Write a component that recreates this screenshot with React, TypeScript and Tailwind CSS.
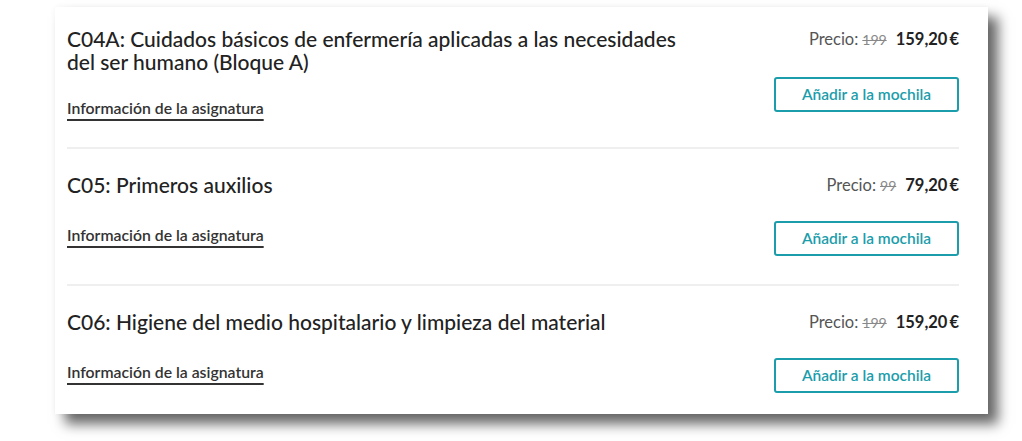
const courses = [
  {
    title: 'C04A: Cuidados básicos de enfermería aplicadas a las necesidades del ser humano (Bloque A)',
    old: '199',
    price: '159,20',
  },
  { title: 'C05: Primeros auxilios', old: '99', price: '79,20' },
  { title: 'C06: Higiene del medio hospitalario y limpieza del material', old: '199', price: '159,20' },
]

type RowProps = { title: string; old: string; price: string; index: number; last: boolean }

function CourseRow({ title, old, price, index, last }: RowProps) {
  const first = index === 0
  return (
    <div
      className={`flex justify-between ${first ? 'pt-[20px]' : 'border-t-2 border-[#efefef] pt-[24px]'} ${
        last ? 'pb-[21px]' : first ? 'pb-[30px]' : 'pb-[28px]'
      }`}
    >
      <div className="flex w-[630px] flex-col">
        <h3 className="text-[21px] leading-[23px] font-medium text-[#222]">{title}</h3>
        <a
          href="#"
          className={`${first ? 'mt-[26px]' : 'mt-[30px]'} self-start text-[15.8px] leading-[18px] font-semibold text-[#333] underline decoration-2 underline-offset-[5px]`}
        >
          Información de la asignatura
        </a>
      </div>
      <div className="flex flex-col items-end">
        <div className="flex h-[24px] items-center text-[16.5px]">
          <span className="text-[#555]">Precio:</span>
          <span className="ml-1 text-[14px] text-[#888] line-through">{old}</span>
          <span className="ml-[9px] font-bold text-[#222]">
            {price}
            <span className="ml-[2px]">€</span>
          </span>
        </div>
        <button
          className={`${first ? 'mt-[26px]' : 'mt-[24px]'} h-[35px] w-[185px] rounded-[3px] border-2 border-[#1c9dab] text-[15.5px] font-semibold text-[#1c9dab]`}
        >
          Añadir a la mochila
        </button>
      </div>
    </div>
  )
}

export default function App() {
  return (
    <div className="h-[441px] w-[1022px] bg-white pt-[7px] pl-[55px]" style={{ fontFamily: 'Lato, "Noto Sans", sans-serif' }}>
      <div className="w-[933px] bg-white pr-[29px] pl-[12px] shadow-[10px_10px_12px_rgba(0,0,0,0.6),0_0_6px_rgba(0,0,0,0.04)]">
        {courses.map((c, i) => (
          <CourseRow key={c.title} {...c} index={i} last={i === courses.length - 1} />
        ))}
      </div>
    </div>
  )
}
